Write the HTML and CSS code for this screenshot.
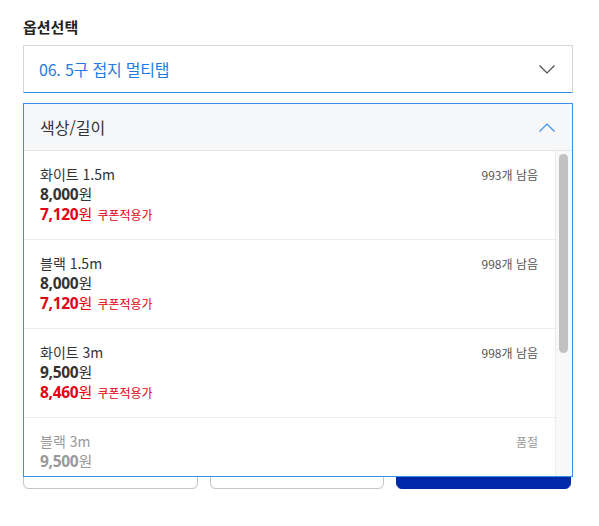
FILE: index.html
```html
<!DOCTYPE html>
<html lang="ko">
<head>
<meta charset="utf-8">
<title>옵션선택</title>
<link rel="stylesheet" href="styles.css">
</head>
<body>
<div class="wrap">
  <h2 class="title">옵션선택</h2>
  <div class="select">
    <span class="select-value">06. 5구 접지 멀티탭</span>
    <svg class="chev" width="16" height="9" viewBox="0 0 16 9"><polyline points="0.5,0.5 8,8 15.5,0.5" fill="none" stroke="#4a4a4a" stroke-width="1.2"/></svg>
  </div>
  <div class="covered"></div>
  <div class="buttons">
    <button class="btn btn-line"></button>
    <button class="btn btn-line"></button>
    <button class="btn btn-primary"></button>
  </div>

  <div class="panel">
    <div class="panel-head">
      <span>색상/길이</span>
      <svg class="chev" width="16" height="9" viewBox="0 0 16 9"><polyline points="0.5,8.5 8,1 15.5,8.5" fill="none" stroke="#3d8fe8" stroke-width="1.2"/></svg>
    </div>
    <div class="list-wrap">
      <ul class="list">
        <li class="item">
          <div class="row"><span class="name">화이트 1.5m</span><span class="stock">993개 남음</span></div>
          <div class="price"><b>8,000</b>원</div>
          <div class="coupon"><b>7,120</b>원 <small>쿠폰적용가</small></div>
        </li>
        <li class="item">
          <div class="row"><span class="name">블랙 1.5m</span><span class="stock">998개 남음</span></div>
          <div class="price"><b>8,000</b>원</div>
          <div class="coupon"><b>7,120</b>원 <small>쿠폰적용가</small></div>
        </li>
        <li class="item">
          <div class="row"><span class="name">화이트 3m</span><span class="stock">998개 남음</span></div>
          <div class="price"><b>9,500</b>원</div>
          <div class="coupon"><b>8,460</b>원 <small>쿠폰적용가</small></div>
        </li>
        <li class="item soldout">
          <div class="row"><span class="name">블랙 3m</span><span class="stock">품절</span></div>
          <div class="price"><b>9,500</b>원</div>
        </li>
      </ul>
      <div class="scrollbar"><div class="thumb"></div></div>
    </div>
  </div>
</div>
</body>
</html>
```

FILE: styles.css
```css
* { box-sizing: border-box; }
html, body { margin: 0; padding: 0; background: #fff; }
body {
  font-family: "Noto Sans CJK KR", "Noto Sans", sans-serif;
  color: #333;
}
.wrap {
  position: relative;
  width: 550px;
  margin-left: 23px;
  padding-top: 16px;
}
.title {
  margin: 0 0 8px;
  font-size: 15px;
  line-height: 21px;
  font-weight: 700;
  color: #222;
}
.select {
  height: 48px;
  border: 1px solid #d6d6d6;
  border-bottom-color: #2d8ae6;
  display: flex;
  align-items: center;
  justify-content: space-between;
  padding: 0 17px 0 15px;
}
.select-value {
  font-size: 16px;
  color: #1f7be3;
  letter-spacing: -0.2px;
}
.chev { display: block; }
.covered { height: 348px; }
.buttons {
  display: grid;
  grid-template-columns: 1fr 1fr 1fr;
  gap: 12px;
  margin-right: 2px;
}
.btn {
  height: 48px;
  border-radius: 6px;
  border: 1px solid #c6c6c6;
  background: #fff;
  box-shadow: 0 1px 1px rgba(0,0,0,0.08);
}
.btn-primary {
  background: #0029aa;
  border-color: #0029aa;
}
.panel {
  position: absolute;
  top: 103px;
  left: 0;
  width: 550px;
  height: 374px;
  border: 1px solid #3b8fe6;
  background: #fff;
  display: flex;
  flex-direction: column;
}
.panel-head {
  height: 47px;
  flex: none;
  background: #f6f7f9;
  border-bottom: 1px solid #e6e6e6;
  display: flex;
  align-items: center;
  justify-content: space-between;
  padding: 0 17px 0 16px;
  font-size: 16px;
  color: #333;
}
.list-wrap {
  flex: 1;
  display: flex;
  min-height: 0;
}
.list {
  list-style: none;
  margin: 0;
  padding: 0;
  flex: 1;
  overflow: hidden;
}
.scrollbar {
  width: 17px;
  flex: none;
  background: #f8f8f8;
  border-left: 1px solid #ececec;
  padding: 3px 4px 0 3px;
}
.thumb {
  height: 199px;
  background: #c1c1c1;
  border-radius: 5px;
}
.item {
  padding: 13px 17px 15px 16px;
  border-bottom: 1px solid #ececec;
}
.row {
  display: flex;
  justify-content: space-between;
  align-items: center;
  height: 20px;
}
.name {
  font-size: 14px;
  color: #333;
}
.stock {
  font-size: 12px;
  color: #555;
}
.price, .coupon {
  height: 20px;
  line-height: 20px;
  font-size: 15px;
}
.price { color: #333; }
.price b, .coupon b {
  font-family: "Open Sans", "Noto Sans", sans-serif;
  font-weight: 700;
  font-size: 15.5px;
  letter-spacing: -0.3px;
}
.coupon { color: #e50012; }
.coupon small { font-size: 12px; margin-left: 1px; }
.soldout .name, .soldout .stock, .soldout .price { color: #999; }
.soldout .price b { color: #999; }
```
